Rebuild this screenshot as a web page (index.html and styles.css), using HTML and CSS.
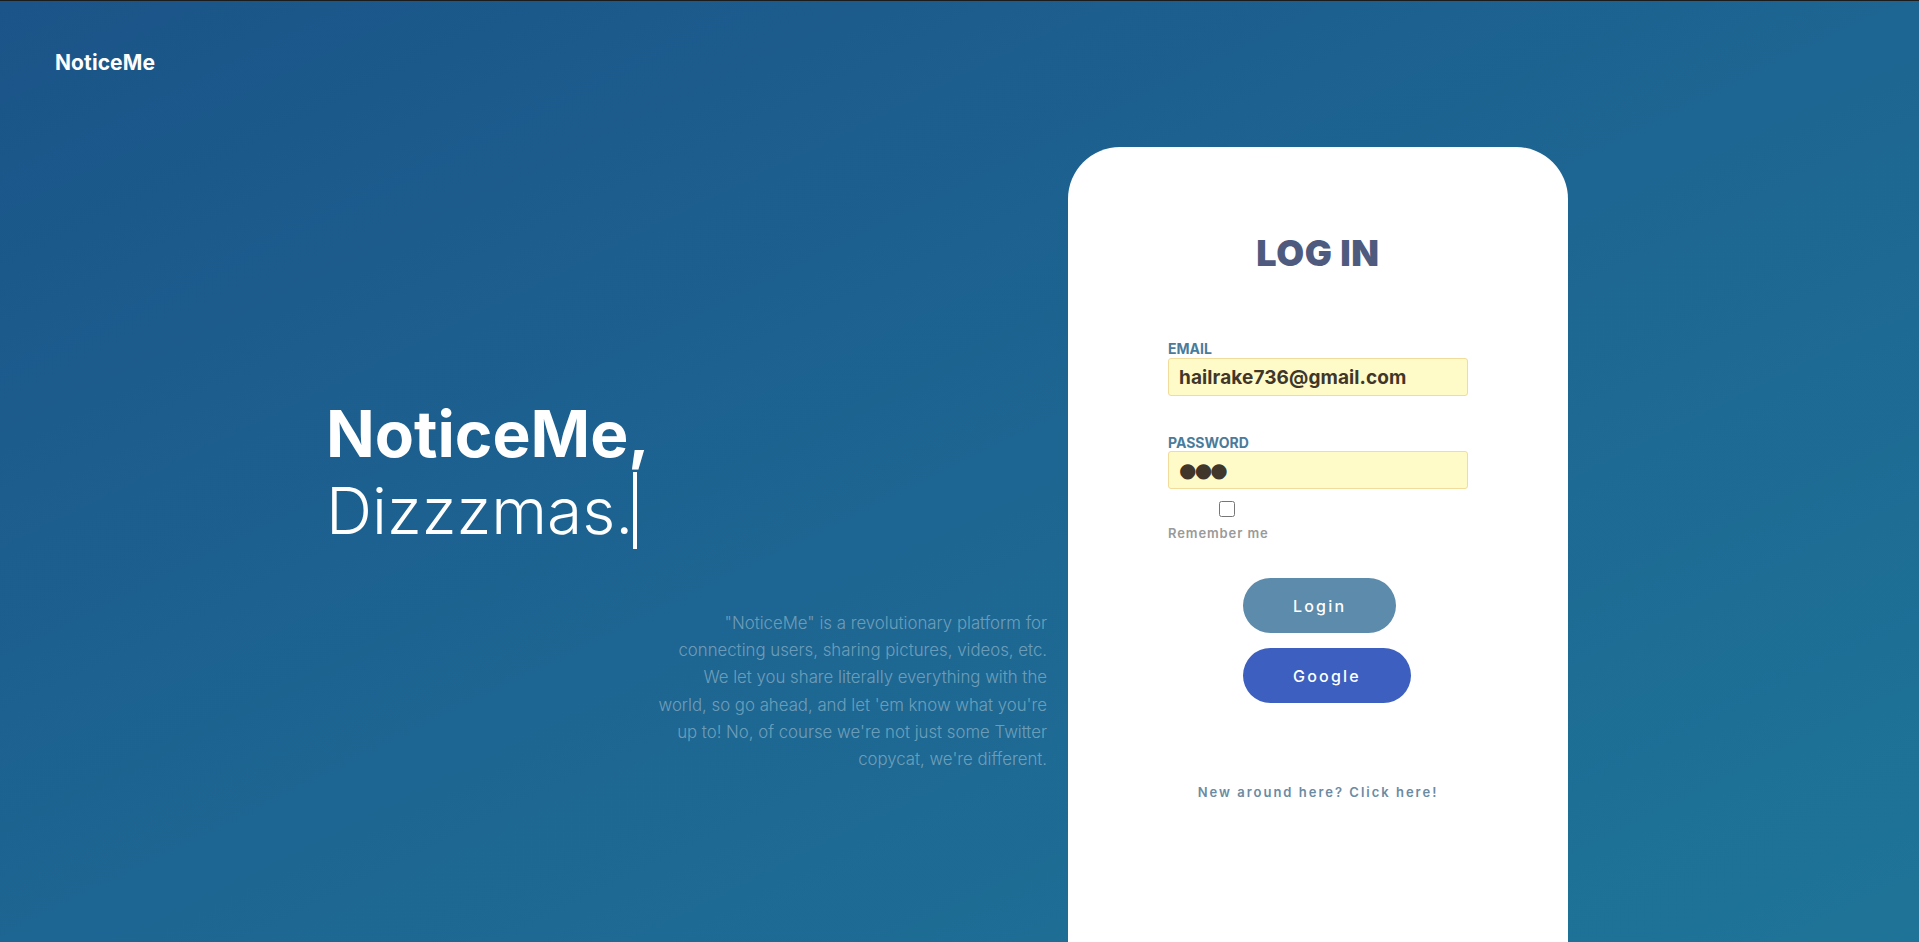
FILE: index.html
```html
<!DOCTYPE html>
<html lang="en">
<head>
<meta charset="utf-8">
<title>NoticeMe</title>
<link rel="stylesheet" href="styles.css">
</head>
<body>
<header class="topbar">
  <a class="brand" href="#">NoticeMe</a>
</header>
<main class="main">
  <section class="hero">
    <h1 class="hero-title"><span class="hero-strong">NoticeMe,</span><br><span class="hero-light typed">Dizzzmas.</span></h1>
    <p class="hero-text">"NoticeMe" is a revolutionary platform for<br>connecting users, sharing pictures, videos, etc.<br>We let you share literally everything with the<br>world, so go ahead, and let 'em know what you're<br>up to! No, of course we're not just some Twitter<br>copycat, we're different.</p>
  </section>
  <section class="card">
    <h2 class="card-title">LOG IN</h2>
    <form class="form">
      <label class="field-label" for="email">EMAIL</label>
      <input class="field-input" id="email" type="text" value="hailrake736@gmail.com">
      <label class="field-label field-label-second" for="password">PASSWORD</label>
      <input class="field-input field-dots" id="password" type="text" value="●●●">
      <input class="remember-box" id="remember" type="checkbox">
      <label class="remember-label" for="remember">Remember me</label>
      <button class="btn btn-login" type="button">Login</button>
      <button class="btn btn-google" type="button">Google</button>
    </form>
    <a class="signup-link" href="#">New around here? Click here!</a>
  </section>
</main>
</body>
</html>
```
FILE: styles.css
```css
* { box-sizing: border-box; }

html, body {
  margin: 0;
  padding: 0;
  height: 100%;
  overflow: hidden;
}

body {
  border-top: 1px solid #1c1c1c;
  background: linear-gradient(to bottom right, #1b5488 0%, #1d6592 50%, #1e7498 100%);
  font-family: Inter, "Noto Sans", sans-serif;
  color: #fff;
}

.topbar {
  padding: 50px 55px 0;
  height: 73px;
}

.brand {
  display: inline-block;
  font-size: 21px;
  line-height: 24px;
  font-weight: 700;
  letter-spacing: 0.1px;
  color: #fff;
  text-decoration: none;
}

.main {
  display: flex;
  align-items: flex-start;
  padding-top: 73px;
}

.hero {
  width: 721px;
  margin-left: 326px;
  margin-right: 21px;
  padding-top: 248px;
  display: flex;
  flex-direction: column;
}

.hero-title {
  margin: 0;
  font-size: 64px;
  line-height: 77px;
  font-weight: 400;
}

.hero-strong { font-weight: 700; }

.hero-light { font-weight: 300; }

.typed {
  border-right: 4px solid #fff;
  padding-right: 0;
}

.hero-text {
  margin: 61px 0 0;
  align-self: flex-end;
  text-align: right;
  font-size: 16.8px;
  line-height: 27.2px;
  font-weight: 300;
  color: rgba(255, 255, 255, 0.37);
}

.card {
  width: 500px;
  height: 820px;
  flex: none;
  background: #fff;
  border-radius: 52px 52px 0 0;
  padding: 84px 100px 0;
  display: flex;
  flex-direction: column;
}

.card-title {
  margin: 0;
  text-align: center;
  font-size: 36px;
  line-height: 44px;
  font-weight: 900;
  letter-spacing: 0.6px;
  color: #4e5a7e;
}

.form {
  margin-top: 65px;
  display: flex;
  flex-direction: column;
  align-items: flex-start;
}

.field-label {
  font-size: 14px;
  line-height: 17px;
  font-weight: 700;
  color: #4a7b9b;
  margin-bottom: 1px;
}

.field-label-second { margin-top: 38px; margin-bottom: 0; }

.field-input {
  width: 300px;
  height: 38px;
  margin: 0;
  padding: 0 10px;
  border: 1px solid #f1dc9c;
  border-radius: 3px;
  background: #fffbc8;
  font-family: Inter, "Noto Sans", sans-serif;
  font-size: 19px;
  font-weight: 700;
  letter-spacing: 0.1px;
  color: #40372a;
  outline: none;
}

.field-dots {
  font-family: "DejaVu Sans", sans-serif;
  font-size: 20px;
  letter-spacing: -1.8px;
  padding-left: 10px;
}

.remember-box {
  width: 16px;
  height: 16px;
  margin: 12px 0 0 51px;
}

.remember-label {
  margin-top: 8px;
  font-size: 13px;
  line-height: 16px;
  font-weight: 600;
  letter-spacing: 0.9px;
  color: #9a9a9a;
}

.btn {
  height: 55px;
  margin-left: 75px;
  padding: 0 50px;
  border: none;
  border-radius: 28px;
  color: #fff;
  font-family: Inter, "Noto Sans", sans-serif;
  font-size: 16px;
  font-weight: 500;
  letter-spacing: 2.2px;
  cursor: pointer;
}

.btn-login {
  margin-top: 37px;
  background: #5c8bab;
}

.btn-google {
  margin-top: 15px;
  background: #3d5fbf;
}

.signup-link {
  margin-top: 81px;
  text-align: center;
  font-size: 13px;
  line-height: 17px;
  font-weight: 600;
  letter-spacing: 2px;
  color: #6a8ba3;
  text-decoration: none;
}
```
